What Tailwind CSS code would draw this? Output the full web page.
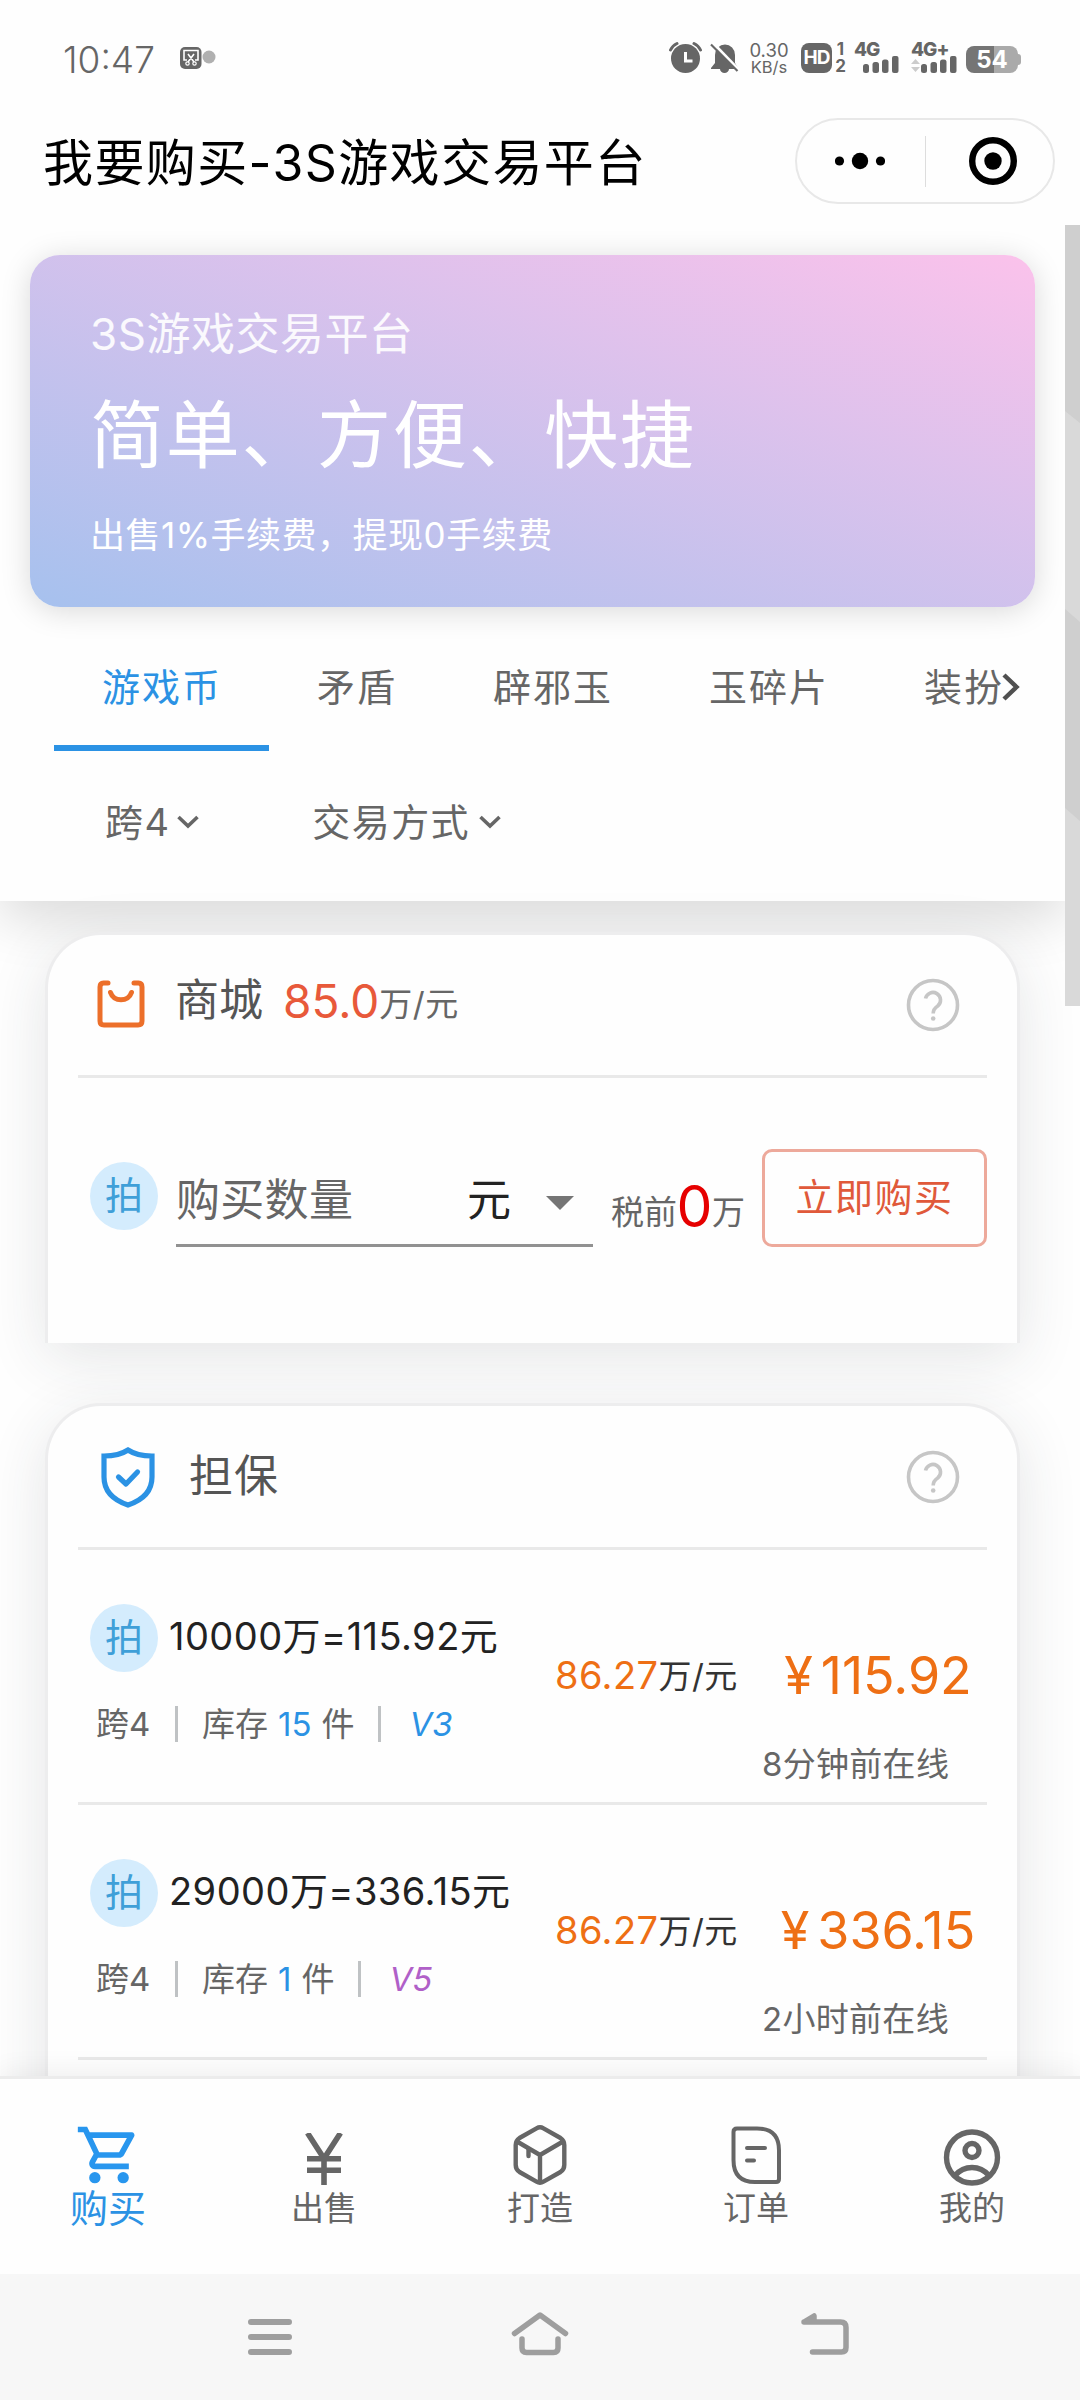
<!DOCTYPE html>
<html lang="zh-CN">
<head>
<meta charset="utf-8">
<title>我要购买-3S游戏交易平台</title>
<script src="https://cdn.jsdelivr.net/npm/@tailwindcss/browser@4"></script>
</head>
<body class="bg-[#fefefe]">
<div class="w-[1080px] h-[2400px] overflow-hidden flex flex-col font-['Inter','Noto_Sans_CJK_SC',sans-serif] font-light text-[#666] whitespace-nowrap">

  <!-- status bar -->
  <div class="h-[104px] shrink-0 flex pt-[40px] pl-[63px] pr-[59px]">
    <div class="h-[40px] leading-[40px] text-[37px] w-[117px] font-light">10:47</div>
    <svg class="w-[40px] h-[40px]" viewBox="180 40 40 40" fill="none">
      <rect x="180" y="47" width="21.500" height="22" rx="5" fill="#666"/>
      <path d="M187 60h-3v-9.500h14v9.500h-3M188 54l6 8M194 54l-6 8" stroke="#fff" stroke-width="1.600"/>
      <circle cx="187.500" cy="63.500" r="1.700" stroke="#fff" stroke-width="1.200"/><circle cx="194.500" cy="63.500" r="1.700" stroke="#fff" stroke-width="1.200"/>
      <circle cx="209" cy="57" r="6.500" fill="#b0b0b0"/>
    </svg>
    <svg class="w-[76px] h-[40px] ml-auto" viewBox="669 40 76 40" fill="none">
      <circle cx="685.500" cy="58.500" r="14.500" fill="#666"/>
      <path d="M670.500 50q2-4.500 6.500-6.500M700.500 50q-2-4.500-6.500-6.500" stroke="#666" stroke-width="3" stroke-linecap="round"/>
      <path d="M685.500 52v9h7" stroke="#fff" stroke-width="3"/>
      <path d="M715 55a9.500 10 0 0 1 20 0v8l3 5v1h-9a4.500 4 0 0 1-9 0h-9v-1l4-5z" fill="#666"/>
      <path d="M713 43l26 27" stroke="#fff" stroke-width="3"/>
      <path d="M711 44.500l26.500 26.500" stroke="#666" stroke-width="2.200"/>
    </svg>
    <div class="w-[48px] pt-[2px] mr-[8px] text-center text-[18.500px] leading-[17px] font-normal">
      <div>0.30</div><div class="text-[16.500px]">KB/s</div>
    </div>
    <div class="mt-[3px] w-[31px] h-[30px] rounded-[8px] bg-[#666] text-white text-[19px] leading-[30px] font-bold text-center tracking-[-1px]">HD</div>
    <div class="w-[17px] mr-[7px] pt-[1px] text-[17px] leading-[17px] font-bold text-center">
      <div>1</div><div>2</div>
    </div>
    <div class="w-[57px] -ml-[2px] pt-[1px] text-[19px] leading-[18px] font-extrabold tracking-[-1px]">
      <div>4G</div>
      <svg class="w-[36px] h-[17px] ml-[9px] -mt-[3px]" viewBox="0 0 36 17" fill="#666"><rect x="0" y="8" width="6" height="9" rx="2.500"/><rect x="9.500" y="6" width="6.500" height="11" rx="2.500"/><rect x="19" y="3.500" width="6.500" height="13.500" rx="2.500"/><rect x="29" y="0" width="6.500" height="17" rx="2"/></svg>
    </div>
    <div class="w-[55px] pt-[1px] text-[19px] leading-[18px] font-extrabold tracking-[-1px]">
      <div>4G+</div>
      <svg class="w-[46px] h-[17px] -mt-[3px]" viewBox="-10 0 46 17" fill="#666"><path d="M-10 8l4.500-5 4.500 5zM-10 11l4.500 5 4.500-5z" fill="#ccc"/><rect x="0" y="8" width="6" height="9" rx="2.500"/><rect x="9.500" y="6" width="6.500" height="11" rx="2.500"/><rect x="19" y="3.500" width="6.500" height="13.500" rx="2.500"/><rect x="29" y="0" width="6.500" height="17" rx="2"/></svg>
    </div>
    <div class="mt-[6px] h-[27px] flex items-center">
      <div class="w-[52px] h-[27px] rounded-[8px] bg-[linear-gradient(90deg,#757575_54%,#aaa_54%)] text-white text-[24px] leading-[28px] font-bold text-center">54</div>
      <div class="w-[3px] h-[11px] rounded-r-[3px] bg-[#aaa]"></div>
    </div>
  </div>

  <!-- title bar -->
  <div class="h-[121px] shrink-0 flex justify-between pl-[43px] pr-[25px] pt-[14px]">
    <div class="h-[88px] leading-[91px] text-[50px] tracking-[1.400px] text-black font-normal">我要购买-3S游戏交易平台</div>
    <div class="w-[260px] h-[86px] rounded-full border-2 border-[#e8e8e8] flex items-center justify-between pl-[38px] pr-[36px]">
      <svg class="w-[50px] h-[20px]" viewBox="0 0 50 20"><circle cx="4.500" cy="10" r="4.600"/><circle cx="25" cy="10" r="8.200"/><circle cx="45.500" cy="10" r="4.600"/></svg>
      <div class="w-px h-[51px] bg-[#ddd] ml-[-25px] mr-[-22px]"></div>
      <svg class="w-[48px] h-[48px]" viewBox="0 0 48 48"><circle cx="24" cy="24" r="20.800" fill="none" stroke="#000" stroke-width="6.400"/><circle cx="24" cy="24" r="8.700"/></svg>
    </div>
  </div>

  <!-- page body -->
  <div class="h-[1851px] shrink-0 overflow-hidden flex">
    <div class="w-[1065px] h-full shrink-0">
      <div class="h-[676px] pt-[30px] bg-[#fefefe] shadow-[0_18px_50px_rgba(0,0,0,0.14)]">
        <div class="ml-[30px] w-[1005px] h-[352px] rounded-[30px] bg-[linear-gradient(to_top_right,#a6c1ee,#fbc2eb)] shadow-[0_4px_30px_rgba(0,0,0,0.15)] pl-[60px] pt-[50px] text-white font-normal">
          <div class="h-[56px] leading-[58px] text-[44px] tracking-[0.500px] text-white/90">3S游戏交易平台</div>
          <div class="mt-[28px] h-[90px] leading-[93px] text-[74px] tracking-[1.700px]">简单、方便、快捷</div>
          <div class="mt-[32px] h-[48px] leading-[49px] text-[35px] tracking-[0.500px]">出售1%手续费，提现0手续费</div>
        </div>

        <div class="ml-[54px] mt-[38px] h-[106px] flex text-[38px] tracking-[2px] leading-[84px] font-normal">
          <div class="w-[215px] pl-[48px] border-b-[6px] border-[#2b92e4] text-[#2b92e4]">游戏币</div>
          <div class="w-[176px] pl-[48px]">矛盾</div>
          <div class="w-[216px] pl-[48px]">辟邪玉</div>
          <div class="w-[216px] pl-[48px]">玉碎片</div>
          <div class="pl-[47px] w-[125px]">装扮</div>
          <svg class="w-[18px] h-[28px] mt-[28px]" viewBox="0 0 18 28" fill="none" stroke="#505050" stroke-width="4.500"><path d="M2 2l12.500 12-12.500 12"/></svg>
        </div>

        <div class="ml-[105px] mt-[41px] h-[60px] flex text-[38px] tracking-[1.400px] leading-[60px] font-normal">
          <div>跨4</div>
          <svg class="w-[22px] h-[14px] mt-[23px] ml-[7px]" viewBox="0 0 22 14" fill="none" stroke="#666" stroke-width="3.600"><path d="M1.500 2l9.500 9 9.500-9"/></svg>
          <div class="ml-[113px]">交易方式</div>
          <svg class="w-[22px] h-[14px] mt-[23px] ml-[9px]" viewBox="0 0 22 14" fill="none" stroke="#666" stroke-width="3.600"><path d="M1.500 2l9.500 9 9.500-9"/></svg>
        </div>
      </div>

      <!-- mall card -->
      <div class="ml-[45px] mt-[31px] w-[975px] h-[411px] rounded-t-[56px] border-[3px] border-b-0 border-[#ededee] bg-[#fefefe] shadow-[0_14px_60px_rgba(40,50,60,0.12)] px-[30px]">
        <div class="h-[143px] border-b-[3px] border-[#e9e9e9] flex pl-[19px] pr-[27px]">
          <svg class="w-[48px] h-[48px] mt-[45px]" viewBox="0 0 48 48" fill="none" stroke="#ec6f2a" stroke-width="5" stroke-linecap="round"><path d="M11 3H6.500Q3 3 3 7v34q0 4 4 4h34q4 0 4-4V7q0-4-3.500-4H37"/><path d="M13.500 12.500a11 10.500 0 0 0 21 0"/></svg>
          <div class="ml-[30px] mt-[33px] leading-[64px] text-[44px] font-normal text-[#555]">商城</div>
          <div class="ml-[20px] mt-[34px] leading-[64px] text-[46px] font-normal text-[#e8593a]">85.0</div>
          <div class="mt-[37px] leading-[64px] text-[33px] tracking-[0.500px] font-normal">万/元</div>
          <svg class="w-[54px] h-[54px] mt-[43px] ml-auto" viewBox="0 0 54 54" fill="none" stroke="#c6c6c6" stroke-width="3.600"><circle cx="27" cy="27" r="24.500"/><path d="M19.500 20.500a7.600 7.600 0 1 1 12.200 7.500q-4.500 3-4.500 7.500"/><circle cx="27.200" cy="40.500" r="2.300" fill="#c6c6c6" stroke="none"/></svg>
        </div>
        <div class="flex pl-[12px] pt-[71px] font-normal">
          <div class="w-[68px] h-[68px] mt-[13px] rounded-full bg-[#d4ecfd] text-[#3f9fd8] text-[38px] leading-[67px] text-center">拍</div>
          <div class="ml-[18px] w-[417px] h-[98px] border-b-[3px] border-[#919191] flex text-[44px] leading-[102px]">
            <div class="w-[291px] tracking-[0.300px]">购买数量</div>
            <div class="w-[79px] text-[#222]">元</div>
            <svg class="w-[28px] h-[14px] mt-[47px]" viewBox="0 0 28 14" fill="#757575"><path d="M0 0h28L14 14z"/></svg>
          </div>
          <div class="ml-[18px] mt-[20px] w-[151px] h-[80px] flex text-[33px] leading-[87px]">
            <span>税前</span><span class="text-[#e60000] text-[57px] leading-[76px] w-[35px] flex justify-center">0</span><span>万</span>
          </div>
          <div class="w-[225px] h-[98px] rounded-[10px] border-[3px] border-[#eda99b] text-[#e0593a] text-[38px] tracking-[1.500px] leading-[91px] text-center">立即购买</div>
        </div>
      </div>

      <!-- guarantee card -->
      <div class="ml-[45px] mt-[60px] w-[975px] h-[760px] rounded-t-[56px] border-[3px] border-b-0 border-[#ededee] bg-[#fefefe] shadow-[0_14px_60px_rgba(40,50,60,0.12)] px-[30px] font-normal">
        <div class="h-[144px] border-b-[3px] border-[#e9e9e9] flex pl-[23px] pr-[27px]">
          <svg class="w-[54px] h-[62px] mt-[40px]" viewBox="0 0 54 62" fill="none" stroke="#2b92e4" stroke-width="5.200"><path d="M27 4q-9 6-24 6v21q0 20 24 28 24-8 24-28v-21q-15 0-24-6z"/><path d="M17.500 31l7.500 7 11.500-12" stroke-linecap="round" stroke-linejoin="round"/></svg>
          <div class="ml-[34px] mt-[38px] leading-[65px] text-[44px] tracking-[1px] text-[#555]">担保</div>
          <svg class="w-[54px] h-[54px] mt-[44px] ml-auto" viewBox="0 0 54 54" fill="none" stroke="#c6c6c6" stroke-width="3.600"><circle cx="27" cy="27" r="24.500"/><path d="M19.500 20.500a7.600 7.600 0 1 1 12.200 7.500q-4.500 3-4.500 7.500"/><circle cx="27.200" cy="40.500" r="2.300" fill="#c6c6c6" stroke="none"/></svg>
        </div>

        <div class="h-[255px] border-b-[3px] border-[#e9e9e9] flex pl-[12px]">
          <div class="w-[465px] pt-[54px]">
            <div class="flex">
              <div class="w-[68px] h-[68px] rounded-full bg-[#d4ecfd] text-[#3f9fd8] text-[38px] leading-[66px] text-center">拍</div>
              <div class="ml-[11px] text-[38px] tracking-[0.450px] leading-[65px] text-[#222]">10000万=115.92元</div>
            </div>
            <div class="mt-[34px] h-[36px] pl-[6px] flex text-[33px] leading-[37px]">
              <div class="w-[79px]">跨4</div>
              <div class="w-[3px] bg-[#bfc2c4]"></div>
              <div class="ml-[24px] flex gap-[10px]"><span>库存</span><span class="text-[#2b92e4]">15</span><span>件</span></div>
              <div class="w-[3px] bg-[#bfc2c4] ml-[24px]"></div>
              <div class="ml-[28px] italic text-[#2b92e4]">V3</div>
            </div>
          </div>
          <div class="w-[185px] pt-[105px] flex leading-[40px]">
            <span class="text-[38px] tracking-[0.400px] text-[#ee6f14]">86.27</span><span class="text-[33px] leading-[43px] tracking-[0.500px] text-[#333]">万/元</span>
          </div>
          <div class="w-[246px] pt-[96px]">
            <div class="flex justify-center gap-[8px] pl-[30px] text-[52px] leading-[60px] text-[#ee6f14]"><span>¥</span><span>115.92</span></div>
            <div class="mt-[38px] pl-[22px] text-[33px] tracking-[0.300px] leading-[40px]">8分钟前在线</div>
          </div>
        </div>

        <div class="h-[255px] border-b-[3px] border-[#e9e9e9] flex pl-[12px]">
          <div class="w-[465px] pt-[54px]">
            <div class="flex">
              <div class="w-[68px] h-[68px] rounded-full bg-[#d4ecfd] text-[#3f9fd8] text-[38px] leading-[66px] text-center">拍</div>
              <div class="ml-[11px] text-[38px] tracking-[0.450px] leading-[65px] text-[#222]">29000万=336.15元</div>
            </div>
            <div class="mt-[34px] h-[36px] pl-[6px] flex text-[33px] leading-[37px]">
              <div class="w-[79px]">跨4</div>
              <div class="w-[3px] bg-[#bfc2c4]"></div>
              <div class="ml-[24px] flex gap-[10px]"><span>库存</span><span class="text-[#2b92e4]">1</span><span>件</span></div>
              <div class="w-[3px] bg-[#bfc2c4] ml-[24px]"></div>
              <div class="ml-[28px] italic text-[#b060c8]">V5</div>
            </div>
          </div>
          <div class="w-[185px] pt-[105px] flex leading-[40px]">
            <span class="text-[38px] tracking-[0.400px] text-[#ee6f14]">86.27</span><span class="text-[33px] leading-[43px] tracking-[0.500px] text-[#333]">万/元</span>
          </div>
          <div class="w-[246px] pt-[96px]">
            <div class="flex justify-center gap-[8px] pl-[30px] text-[52px] leading-[60px] text-[#ee6f14]"><span>¥</span><span>336.15</span></div>
            <div class="mt-[38px] pl-[22px] text-[33px] tracking-[0.300px] leading-[40px]">2小时前在线</div>
          </div>
        </div>
      </div>
    </div>

    <!-- scroll track -->
    <svg class="w-[15px] h-[781px] shrink-0 relative" viewBox="0 0 15 781"><path fill="#d9d9d9" d="M0 0h15v781H0z"/><path fill="#cfcfcf" d="M0 0h15v198L0 186zM0 384l15 13v199L0 583z"/></svg>
  </div>

  <!-- tab bar -->
  <div class="relative h-[198px] shrink-0 border-t-[3px] border-[#ececec] bg-[#fefefe] shadow-[0_-6px_24px_rgba(0,20,20,0.06)] grid grid-cols-5 text-center text-[33px] leading-[40px] font-normal">
    <div class="pt-[42px] flex flex-col items-center text-[#2b92e4] text-[38px]">
      <svg class="w-[68px] h-[68px] mr-[-1px]" viewBox="0 0 24 24" fill="#2896ee"><path d="M15.550 13c.75 0 1.410-.41 1.750-1.030l3.580-6.490A.996.996 0 0 0 20.010 4H5.210l-.94-2H1v2h2l3.600 7.590-1.350 2.440C4.520 15.370 5.480 17 7 17h12v-2H7l1.100-2h7.450zM6.160 6h12.150l-2.760 5H8.530L6.160 6z"/><circle cx="7" cy="20" r="2"/><circle cx="17" cy="20" r="2"/></svg>
      <div class="mt-[-1px]">购买</div>
    </div>
    <div class="pt-[54px] flex flex-col items-center">
      <svg class="w-[38px] h-[52px]" viewBox="0 0 38 52" fill="none" stroke="#666" stroke-width="5.600"><path d="M2.500 0L19 25.500 35.500 0M19 24v28M2 25.700h34M2 37.300h34"/></svg>
      <div class="mt-[3px]">出售</div>
    </div>
    <div class="pt-[46px] flex flex-col items-center">
      <svg class="w-[54px] h-[60px]" viewBox="0 0 54 60" fill="none" stroke="#666" stroke-width="4.400" stroke-linejoin="round"><path d="M23.500 3.300q3.500-2 7 0l17 9.700q3.800 2.500 3.800 7v20q0 4.500-3.800 7l-17 9.700q-3.500 2-7 0L6.500 47q-3.800-2.500-3.800-7V20q0-4.500 3.800-7zM4 16.500L27 30l23-13.500M27 30v27"/><path d="M15.500 24v7" stroke-linecap="round"/></svg>
      <div class="mt-[3px]">打造</div>
    </div>
    <div class="pt-[46px] flex flex-col items-center">
      <svg class="w-[50px] h-[60px]" viewBox="0 0 50 60" fill="none" stroke="#666" stroke-width="4" stroke-linecap="round"><path d="M6 3.500h20q22 0 22 22V54q0 3-3 3H24Q2.500 57 2.500 35V7q0-3.500 3.500-3.500zM16 23h18M16 35.500h7"/></svg>
      <div class="mt-[3px]">订单</div>
    </div>
    <div class="pt-[46px] flex flex-col items-center">
      <svg class="w-[58px] h-[62px]" viewBox="0 0 58 62" fill="none" stroke="#666" stroke-width="5.400"><circle cx="29" cy="32.500" r="25.500"/><circle cx="29" cy="25.500" r="7"/><path d="M12 50.500q7-8 17-8t17 8"/></svg>
      <div class="mt-[1px]">我的</div>
    </div>
  </div>

  <!-- system navigation -->
  <div class="relative h-[126px] shrink-0 bg-[#f7f7f7] flex pt-[34px] pl-[242px]">
    <svg class="w-[56px] h-[52px]" viewBox="242 2308 56 52" stroke="#9e9e9e" stroke-width="6" stroke-linecap="round"><path d="M251 2322h38M251 2337h38M251 2352h38"/></svg>
    <svg class="w-[64px] h-[52px] ml-[210px]" viewBox="508 2308 64 52" fill="none" stroke="#9e9e9e" stroke-width="5.500" stroke-linecap="round" stroke-linejoin="round"><path d="M514.500 2333.500L540 2315l25.500 18.500M522 2339v9q0 4.500 4.500 4.500h27q4.500 0 4.500-4.500v-9"/></svg>
    <svg class="w-[56px] h-[52px] ml-[226px]" viewBox="798 2308 56 52" fill="none" stroke="#9e9e9e" stroke-width="5.500" stroke-linecap="round" stroke-linejoin="round"><path d="M812.500 2352h29q4.500 0 4.500-4.500v-20q0-5.500-5.500-5.500H804M804 2322l10-6v5z"/></svg>
  </div>
</div>
</body>
</html>
